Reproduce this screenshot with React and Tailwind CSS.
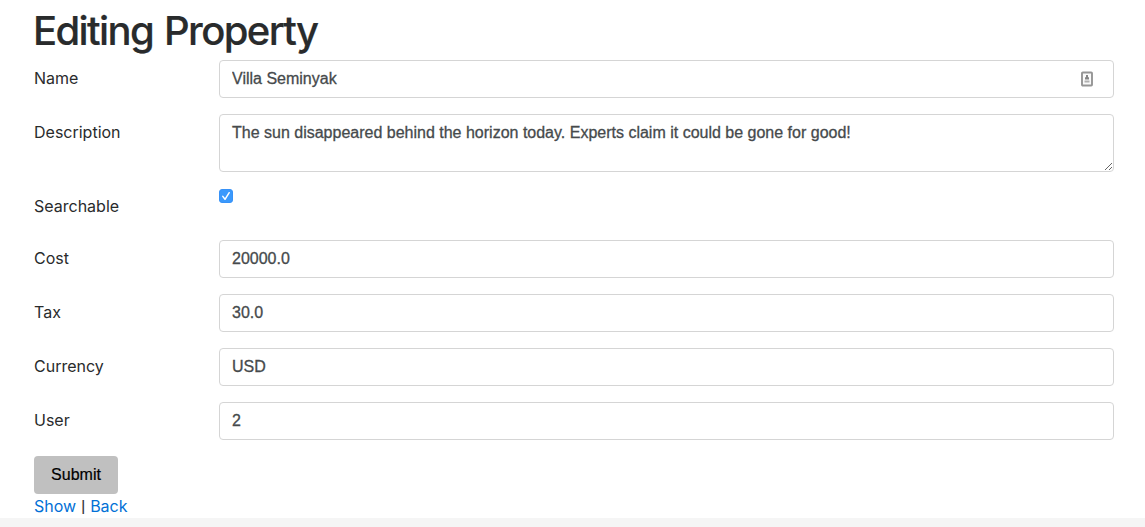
import React from "react";

const inputClass =
  "block h-[38px] w-full rounded-[4px] border border-[#d5d5d5] bg-white px-3 pb-px font-['Liberation_Sans',Arial,sans-serif] text-[16px] text-[#464a4c] outline-none [-webkit-text-stroke:0.3px_#464a4c]";

function Row({ label, id, children }) {
  return (
    <div className="mb-4 flex">
      <label htmlFor={id} className="w-[185px] shrink-0 pt-[6px] text-[16px] leading-6">
        {label}
      </label>
      <div className="relative flex-1">{children}</div>
    </div>
  );
}

function ContactIcon() {
  return (
    <svg className="absolute top-[11px] right-[20px]" width="14" height="16" viewBox="0 0 14 16" aria-hidden="true">
      <rect x="2" y="1.5" width="10" height="13" rx="0.8" fill="#fafafa" stroke="#959595" strokeWidth="1.9" />
      <path d="M6 4h2v2.2h1V8.4H5V6.2h1z" fill="#858585" />
      <path d="M4.5 9.5h5v2h-5z" fill="#b0b0b0" />
    </svg>
  );
}

export default function App() {
  return (
    <div className="flex h-[527px] flex-col overflow-hidden bg-white font-['Inter',sans-serif] text-[#292b2c]">
      <main className="h-[518px] shrink-0 pt-2 pr-[31px] pl-[34px]">
        <h1 className="mb-2 -ml-px h-11 text-[40px] leading-[46px] font-medium tracking-[-1.63px] whitespace-nowrap [word-spacing:2px] [-webkit-text-stroke:0.2px_#292b2c]">
          Editing Property
        </h1>
        <form onSubmit={(e) => e.preventDefault()}>
          <Row label="Name" id="name">
            <input id="name" className={inputClass} defaultValue="Villa Seminyak" />
            <ContactIcon />
          </Row>
          <Row label="Description" id="description">
            <textarea
              id="description"
              className="block h-[58px] w-full resize-none rounded-[4px] border border-[#d5d5d5] bg-white px-3 pt-[7px] font-['Liberation_Sans',Arial,sans-serif] text-[16px] leading-[22px] text-[#464a4c] outline-none [-webkit-text-stroke:0.3px_#464a4c]"
              defaultValue="The sun disappeared behind the horizon today. Experts claim it could be gone for good!"
            />
            <svg className="absolute right-[2px] bottom-[2px]" width="7" height="7" viewBox="0 0 7 7" aria-hidden="true">
              <path d="M0 7 7 0M4 7 7 4" stroke="#555" strokeWidth="0.9" />
            </svg>
          </Row>
          <div className="h-[52px]">
            <Row label="Searchable" id="searchable">
              <div className="relative mt-px h-[14px] w-[14px]">
                <input
                  id="searchable"
                  type="checkbox"
                  defaultChecked
                  className="peer block h-[14px] w-[14px] appearance-none rounded-[3px] border border-[#aaa] checked:border-[#3792f8] checked:bg-[#3b99fc]"
                />
                <svg className="pointer-events-none absolute inset-0 hidden peer-checked:block" width="14" height="14" viewBox="0 0 14 14" aria-hidden="true">
                  <path d="m3.8 7.4 2.2 2.9 4.2-6.6" fill="none" stroke="#fff" strokeWidth="1.5" strokeLinecap="round" strokeLinejoin="round" />
                </svg>
              </div>
            </Row>
          </div>
          <Row label="Cost" id="cost">
            <input id="cost" className={inputClass} defaultValue="20000.0" />
          </Row>
          <Row label="Tax" id="tax">
            <input id="tax" className={inputClass} defaultValue="30.0" />
          </Row>
          <Row label="Currency" id="currency">
            <input id="currency" className={inputClass} defaultValue="USD" />
          </Row>
          <Row label="User" id="user">
            <input id="user" className={inputClass} defaultValue="2" />
          </Row>
          <button className="block h-[38px] w-[84px] rounded-[4px] bg-[#c0c0c0] pb-px font-['Liberation_Sans',Arial,sans-serif] text-[16px] text-black [-webkit-text-stroke:0.2px_#000]">
            Submit
          </button>
        </form>
        <nav className="flex h-6 text-[16px] leading-6">
          <a href="#show" className="text-[#0270d6]">Show</a>
          <span className="w-[14px] text-center font-['Liberation_Sans',Arial,sans-serif] text-[15px] [-webkit-text-stroke:0.1px_#292b2c]">|</span>
          <a href="#back" className="text-[#0270d6]">Back</a>
        </nav>
      </main>
      <footer className="flex-1 bg-[#f5f5f5]" />
    </div>
  );
}
